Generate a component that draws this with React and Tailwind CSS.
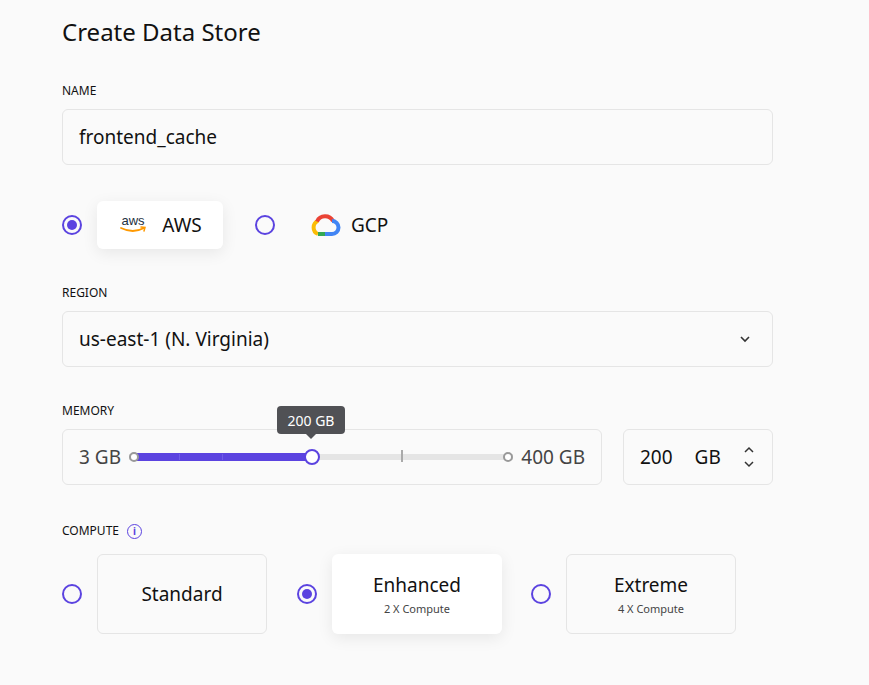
import React from "react";

const Radio = ({ checked }) => (
  <span className="w-5 h-5 rounded-full border-2 border-[#5b43e0] flex items-center justify-center shrink-0">
    {checked && <span className="w-2.5 h-2.5 rounded-full bg-[#5b43e0]" />}
  </span>
);

const Label = ({ children }) => (
  <div className="text-[12px] leading-4 text-[#111] uppercase">{children}</div>
);

const AwsLogo = () => (
  <svg width="32" height="22" viewBox="0 0 32 22">
    <text x="15" y="11" textAnchor="middle" fontSize="13" fontFamily="Liberation Sans, Arial, sans-serif" fill="#232f3e">aws</text>
    <path d="M3 14 Q15 20 26 14" stroke="#f90" strokeWidth="1.8" fill="none" strokeLinecap="round" />
    <path d="M23 13 L27 13.5 L26 17" stroke="#f90" strokeWidth="1.5" fill="none" strokeLinecap="round" />
  </svg>
);

const GcpLogo = () => (
  <svg width="32" height="26" viewBox="0 0 32 26">
    <path d="M9 22 A7 7 0 0 1 9 9" stroke="#fbbc05" strokeWidth="4" fill="none" />
    <path d="M8 9.5 A9 9 0 0 1 24 9" stroke="#ea4335" strokeWidth="4" fill="none" />
    <path d="M23 9 A6.5 6.5 0 0 1 23 22 L16 22" stroke="#4285f4" strokeWidth="4" fill="none" />
    <path d="M9 22 L16 22" stroke="#34a853" strokeWidth="4" fill="none" />
  </svg>
);

const ComputeCard = ({ title, sub, active }) => (
  <div
    className={`w-[170px] h-[80px] rounded-md flex flex-col items-center justify-center ${
      active ? "bg-white shadow-[0_4px_16px_rgba(0,0,0,0.08)]" : "border border-[#e5e5e5]"
    }`}
  >
    <div className="text-[19px] text-[#111]">{title}</div>
    {sub && <div className="text-[11px] text-[#444] mt-0.5">{sub}</div>}
  </div>
);

export default function App() {
  return (
    <div className="min-h-[685px] bg-[#fafafa] pl-[62px] pr-[96px] pt-[16px] font-['Liberation_Sans',Arial,sans-serif] text-[#111]">
      <h1 className="text-[24px] leading-8 font-normal">Create Data Store</h1>

      <div className="mt-[35px]"><Label>Name</Label></div>
      <div className="mt-[10px] h-[56px] border border-[#e5e5e5] rounded-md flex items-center px-4 text-[19px]">
        frontend_cache
      </div>

      <div className="mt-[36px] flex items-center h-[48px]">
        <Radio checked />
        <div className="ml-[15px] w-[126px] h-[48px] bg-white rounded-md shadow-[0_4px_16px_rgba(0,0,0,0.08)] flex items-center justify-center gap-3">
          <AwsLogo />
          <span className="text-[19px]">AWS</span>
        </div>
        <div className="ml-[32px]"><Radio /></div>
        <div className="ml-[34px] flex items-center gap-[10px]">
          <GcpLogo />
          <span className="text-[19px]">GCP</span>
        </div>
      </div>

      <div className="mt-[36px]"><Label>Region</Label></div>
      <div className="mt-[10px] h-[56px] border border-[#e5e5e5] rounded-md flex items-center justify-between pl-4 pr-5 text-[19px]">
        us-east-1 (N. Virginia)
        <svg width="14" height="14" viewBox="0 0 14 14"><path d="M3 5 L7 9 L11 5" stroke="#333" strokeWidth="1.6" fill="none" /></svg>
      </div>

      <div className="mt-[36px]"><Label>Memory</Label></div>
      <div className="mt-[10px] flex gap-[21px]">
        <div className="flex-1 h-[56px] border border-[#e5e5e5] rounded-md flex items-center px-4 gap-1 text-[19px] text-[#444]">
          <span>3 GB</span>
          <div className="relative flex-1 h-[10px] mx-1">
            <div className="absolute left-0 right-0 top-[2px] h-[6px] bg-[#e5e5e5]" />
            <div className="absolute left-[4px] w-[178px] top-[1px] h-[8px] bg-[#5b43e0]" />
            <span className="absolute left-0 top-0 w-[10px] h-[10px] rounded-full border-2 border-[#999] bg-white" />
            <span className="absolute right-0 top-0 w-[10px] h-[10px] rounded-full border-2 border-[#999] bg-white" />
            <span className="absolute left-[50px] top-[2px] w-px h-[6px] bg-[#6f5be8]" />
            <span className="absolute left-[93px] top-[2px] w-px h-[6px] bg-[#6f5be8]" />
            <span className="absolute left-[272px] top-[-2px] w-[2px] h-[12px] bg-[#aaa]" />
            <span className="absolute left-[175px] top-[-3px] w-[16px] h-[16px] rounded-full border-2 border-[#5b43e0] bg-white" />
            <div className="absolute left-[148px] top-[-46px] w-[68px] h-[28px] bg-[#505155] rounded text-white text-[14px] flex items-center justify-center">
              200 GB
              <span className="absolute bottom-[-5px] left-1/2 -translate-x-1/2 w-0 h-0 border-x-[5px] border-x-transparent border-t-[5px] border-t-[#505155]" />
            </div>
          </div>
          <span>400 GB</span>
        </div>
        <div className="w-[150px] h-[56px] border border-[#e5e5e5] rounded-md flex items-center pl-4 pr-4 text-[19px]">
          <span>200</span>
          <span className="ml-[22px]">GB</span>
          <svg className="ml-auto" width="14" height="26" viewBox="0 0 14 26"><path d="M3 8 L7 4 L11 8 M3 18 L7 22 L11 18" stroke="#333" strokeWidth="1.5" fill="none" /></svg>
        </div>
      </div>

      <div className="mt-[38px] flex items-center gap-[8px]">
        <Label>Compute</Label>
        <span className="w-[15px] h-[15px] rounded-full border-[1.5px] border-[#5b43e0] text-[#5b43e0] text-[10px] font-bold flex items-center justify-center leading-none">i</span>
      </div>
      <div className="mt-[15px] flex items-center">
        <Radio />
        <div className="ml-[15px]"><ComputeCard title="Standard" /></div>
        <div className="ml-[30px]"><Radio checked /></div>
        <div className="ml-[15px]"><ComputeCard title="Enhanced" sub="2 X Compute" active /></div>
        <div className="ml-[29px]"><Radio /></div>
        <div className="ml-[15px]"><ComputeCard title="Extreme" sub="4 X Compute" /></div>
      </div>
    </div>
  );
}
